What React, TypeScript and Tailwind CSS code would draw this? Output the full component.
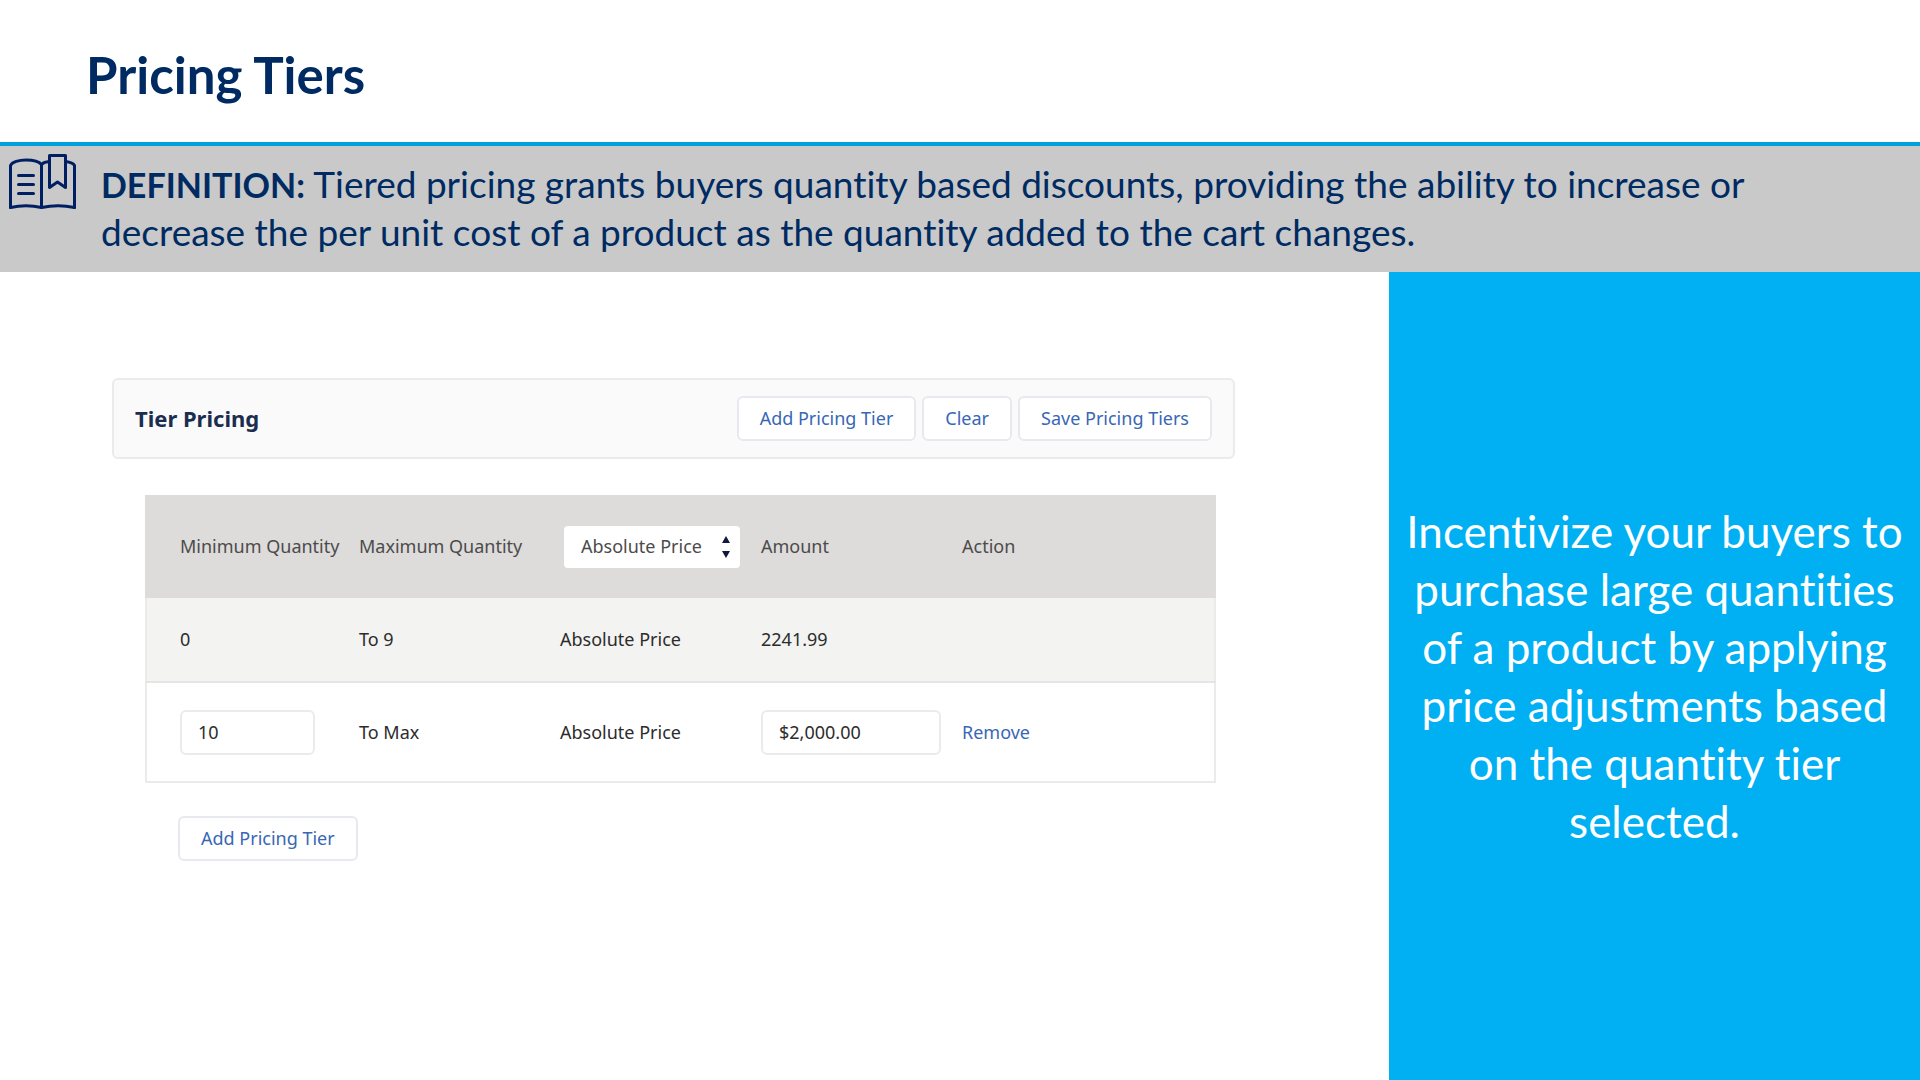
import type { ReactNode } from "react";

const columns = ["Minimum Quantity", "Maximum Quantity", "Adjustment", "Amount", "Action"];

function BookIcon() {
    return (
        <svg
            viewBox="0 0 70 58"
            className="w-[70px] h-[58px] shrink-0"
            fill="none"
            stroke="#001f63"
            strokeWidth="3"
            strokeLinecap="round"
            strokeLinejoin="round"
            aria-hidden="true"
        >
            {/* Pages */}
            <path d="M3.500 54.500V12.500C5 9 12 7 19 7C26 7 32 8.500 34.500 11.500V54" />
            <path d="M34.500 11.500C36 10 39 8.800 42.500 8.500" />
            <path d="M58.500 8.500C63 9 66.500 10.500 67.500 12.500V54.500" />
            <path d="M3.500 54.500C13 52.500 25 52.500 34.500 54.500C44 52.500 58 52.500 67.500 54.500" />
            {/* Bookmark */}
            <path d="M42.500 2.500H58.500V34.500L50.500 29L42.500 34.500Z" />
            {/* Text lines */}
            <path d="M11.500 22.500H26.500M11.500 31.500H26.500M11.500 40.500H26.500" />
        </svg>
    );
}

function Button({ children }: { children: ReactNode }) {
    return (
        <button
            type="button"
            className="h-[45px] px-[21px] rounded-md border-2 border-[#e8e9ee] bg-white text-[#3767b5] text-[18px] whitespace-nowrap"
        >
            {children}
        </button>
    );
}

export default function App() {
    return (
        <div className="min-h-screen flex flex-col bg-white text-[#002b62] font-['Lato',sans-serif] [font-variant-ligatures:none]">
            <header className="h-[142px] px-[86px] pt-[46px]">
                <h1 className="text-[51px] leading-[58px] font-bold">Pricing Tiers</h1>
            </header>

            {/* Definition */}
            <section className="flex gap-[24px] border-t-4 border-[#00a0df] bg-[#c9c9c9] pl-[7px] pr-[140px] pt-[7px] pb-[11px]">
                <BookIcon />
                <p className="pt-[7px] pb-[5px] text-[37px] leading-[48px]">
                    <strong className="text-[34px] leading-none font-bold">DEFINITION:</strong> Tiered pricing grants
                    buyers quantity based discounts, providing the ability to increase or decrease the per unit cost of
                    a product as the quantity added to the cart changes.
                </p>
            </section>

            <div className="flex-1 flex">
                <main className="flex-1 pl-[112px] pr-[154px] pt-[106px] text-[18px] font-['Noto_Sans',sans-serif]">
                    <div className="h-[81px] px-[21px] flex items-center justify-between rounded-md border-2 border-[#ebebeb] bg-[#fafafa]">
                        <h2 className="text-[22px] font-bold text-[#1c2e50]">Tier Pricing</h2>
                        <div className="flex gap-[6px]">
                            <Button>Add Pricing Tier</Button>
                            <Button>Clear</Button>
                            <Button>Save Pricing Tiers</Button>
                        </div>
                    </div>

                    <div className="pl-[33px] pr-[19px] pt-[36px]">
                        <table className="w-full table-fixed border-collapse text-left text-[#2c2c2c]">
                            <colgroup>
                                <col className="w-[213px]" />
                                <col className="w-[201px]" />
                                <col className="w-[201px]" />
                                <col className="w-[201px]" />
                                <col />
                            </colgroup>
                            <thead className="border-2 border-b-0 border-[#dddcdb] bg-[#dddcdb] text-[#4c4b4b]">
                                <tr className="h-[102px]">
                                    {columns.map((name) => (
                                        <th key={name} className="p-0 pb-[2px] font-normal whitespace-nowrap first:pl-[33px]">
                                            {name === "Adjustment" ? (
                                                <div className="relative w-[176px] ml-[4px]">
                                                    <select
                                                        aria-label={name}
                                                        className="appearance-none w-full h-[42px] pl-[17px] rounded-sm bg-white"
                                                    >
                                                        <option>Absolute Price</option>
                                                    </select>
                                                    <svg
                                                        viewBox="0 0 8 22"
                                                        className="absolute right-[10px] top-[10px] w-[8px] h-[22px] fill-[#10183c] pointer-events-none"
                                                    >
                                                        <path d="M4 0L8 7H0ZM0 15H8L4 22Z" />
                                                    </svg>
                                                </div>
                                            ) : (
                                                name
                                            )}
                                        </th>
                                    ))}
                                </tr>
                            </thead>
                            <tbody className="border-2 border-t-0 border-[#ebebeb]">
                                <tr className="h-[84px] bg-[#f3f3f2] border-b-2 border-[#e5e5e5]">
                                    <td className="pl-[33px]">0</td>
                                    <td>To 9</td>
                                    <td>Absolute Price</td>
                                    <td>2241.99</td>
                                    <td />
                                </tr>
                                <tr className="h-[100px]">
                                    <td className="pl-[33px]">
                                        <input
                                            aria-label="Minimum Quantity"
                                            defaultValue="10"
                                            className="w-[135px] h-[45px] pl-[16px] rounded-md border-2 border-[#ebebeb]"
                                        />
                                    </td>
                                    <td>To Max</td>
                                    <td>Absolute Price</td>
                                    <td>
                                        <input
                                            aria-label="Amount"
                                            defaultValue="$2,000.00"
                                            className="w-[180px] h-[45px] pl-[16px] rounded-md border-2 border-[#ebebeb]"
                                        />
                                    </td>
                                    <td>
                                        <a href="#" className="text-[#3767b5]">Remove</a>
                                    </td>
                                </tr>
                            </tbody>
                        </table>

                        <div className="pl-[33px] pt-[33px]">
                            <Button>Add Pricing Tier</Button>
                        </div>
                    </div>
                </main>

                <aside className="w-[531px] shrink-0 flex items-center justify-center px-[12px] bg-[#00b0f3]">
                    <p className="text-center text-white text-[44px] leading-[58px]">
                        Incentivize your buyers to purchase large quantities of a product by applying price adjustments
                        based on the quantity tier selected.
                    </p>
                </aside>
            </div>
        </div>
    );
}
